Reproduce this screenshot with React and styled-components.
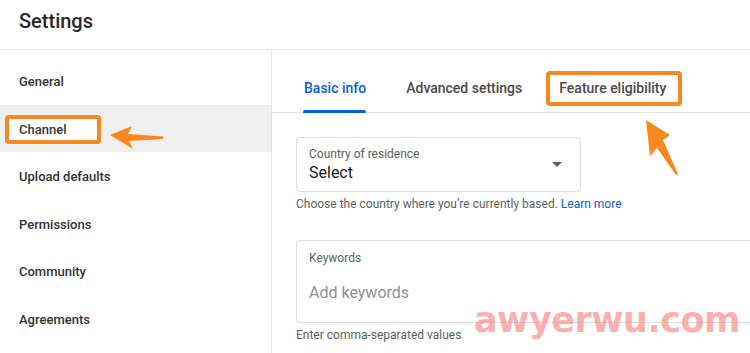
import React from 'react'
import styled, { createGlobalStyle } from 'styled-components'

const Global = createGlobalStyle`
  body {
    margin: 0;
    background: #fff;
    font-family: Roboto, "Liberation Sans", sans-serif;
    color: #0d0d0d;
    overflow: hidden;
  }
`

const navItems = ['General', 'Channel', 'Upload defaults', 'Permissions', 'Community', 'Agreements']

const App = () => {
  return (
    <Page>
      <Global />
      <Header>
        <h1>Settings</h1>
      </Header>
      <Body>
        <Sidebar>
          {navItems.map((item) => (
            <NavItem key={item} active={item === 'Channel'}>
              {item === 'Channel' ? <Marked>{item}</Marked> : item}
            </NavItem>
          ))}
        </Sidebar>
        <Main>
          <Tabs>
            <Tab active>Basic info</Tab>
            <Tab>Advanced settings</Tab>
            <Tab marked>Feature eligibility</Tab>
          </Tabs>
          <Form>
            <Field>
              <Select>
                <div>
                  <Label>Country of residence</Label>
                  <Value>Select</Value>
                </div>
                <Caret />
              </Select>
              <Hint>
                Choose the country where you’re currently based. <a>Learn more</a>
              </Hint>
            </Field>
            <Field>
              <TextArea>
                <Label>Keywords</Label>
                <Placeholder>Add keywords</Placeholder>
              </TextArea>
              <Hint>Enter comma-separated values</Hint>
            </Field>
          </Form>
        </Main>
      </Body>

      {/* annotation arrows */}
      <Arrow style={{ left: 108, top: 122 }} width="58" height="30" viewBox="0 0 58 30">
        <path d="M2 13 L24 4 L20 12 L55 14.5 L55 17 L21 19 L25 27 Z" fill="#f7891f" />
      </Arrow>
      <Arrow style={{ left: 640, top: 115 }} width="44" height="64" viewBox="0 0 44 64">
        <path d="M6 5 L30 20 L23 25 L38 59 L36 60 L17 33 L10 41 Z" fill="#f7891f" />
      </Arrow>
      <Watermark>awyerwu.com</Watermark>
    </Page>
  )
}

// styled components
const Page = styled.div`
  position: relative;
  width: 750px;
  height: 353px;
  overflow: hidden;
`
const Header = styled.div`
  height: 49px;
  border-bottom: 1px solid #e5e5e5;
  display: flex;
  align-items: center;
  padding-left: 19px;
  h1 {
    margin: 0 0 8px;
    font-size: 20px;
    font-weight: 500;
    color: #282828;
  }
`
const Body = styled.div`
  display: flex;
  height: 303px;
`
const Sidebar = styled.div`
  flex-shrink: 0;
  width: 271px;
  border-right: 1px solid #e5e5e5;
  padding-top: 7px;
`
const NavItem = styled.div`
  height: 47.6px;
  display: flex;
  align-items: center;
  padding-left: 19px;
  padding-top: 1px;
  box-sizing: border-box;
  font-size: 13px;
  font-weight: 500;
  color: #333;
  background: ${(p) => (p.active ? '#f0f0f0' : 'transparent')};
`
const Marked = styled.span`
  display: inline-block;
  margin-left: -14px;
  margin-top: 2px;
  width: 96px;
  box-sizing: border-box;
  padding: 4px 0 4px 10px;
  background: #fff;
  border: 4px solid #f7891f;
  border-radius: 4px;
  line-height: 13px;
`
const Main = styled.div`
  flex: 1;
  min-width: 0;
  overflow: hidden;
`
const Tabs = styled.div`
  height: 63px;
  border-bottom: 1px solid #e5e5e5;
  display: flex;
  align-items: flex-end;
  gap: 40px;
  padding-left: 32px;
  box-sizing: border-box;
`
const Tab = styled.div`
  position: relative;
  height: 100%;
  display: flex;
  align-items: center;
  padding-top: 14px;
  box-sizing: border-box;
  flex-shrink: 0;
  font-size: 14px;
  font-weight: 500;
  color: ${(p) => (p.active ? '#065fd4' : '#4a4a4a')};
  ${(p) =>
    p.active &&
    `
    &::after {
      content: '';
      position: absolute;
      left: -1px;
      right: 0;
      bottom: -1px;
      height: 3px;
      border-radius: 2px 2px 0 0;
      background: #065fd4;
    }
  `}
  ${(p) =>
    p.marked &&
    `
    margin-left: -16px;
    align-self: center;
    height: 35px;
    margin-top: 14px;
    padding: 0 12px 0 9px;
    border: 4px solid #f7891f;
    border-radius: 4px;
  `}
`
const Form = styled.div`
  padding: 24px 0 0 24px;
  display: flex;
  flex-direction: column;
  gap: 29px;
`
const Field = styled.div`
  display: flex;
  flex-direction: column;
`
const Select = styled.div`
  width: 285px;
  height: 55px;
  box-sizing: border-box;
  border: 1px solid #ddd;
  border-radius: 4px;
  display: flex;
  align-items: center;
  justify-content: space-between;
  padding: 0 18px 0 12px;
`
const Label = styled.div`
  font-size: 12px;
  color: #606060;
`
const Value = styled.div`
  font-size: 16px;
  color: #1a1a1a;
  margin-top: 2px;
`
const Caret = styled.div`
  width: 0;
  height: 0;
  border-left: 5px solid transparent;
  border-right: 5px solid transparent;
  border-top: 5px solid #606060;
`
const Hint = styled.div`
  margin-top: 5px;
  font-size: 12px;
  color: #606060;
  a {
    color: #065fd4;
  }
`
const TextArea = styled.div`
  width: 470px;
  height: 83px;
  box-sizing: border-box;
  flex-shrink: 0;
  border: 1px solid #ddd;
  border-right: none;
  border-radius: 4px 0 0 4px;
  padding: 10px 12px;
`
const Placeholder = styled.div`
  margin-top: 18px;
  font-size: 16px;
  color: #909090;
`
const Arrow = styled.svg`
  position: absolute;
`
const Watermark = styled.div`
  position: absolute;
  left: 474px;
  top: 300px;
  font-family: "DejaVu Sans", sans-serif;
  font-size: 35px;
  font-weight: 700;
  letter-spacing: -0.5px;
  color: rgba(250, 150, 150, 0.75);
`

export default App
